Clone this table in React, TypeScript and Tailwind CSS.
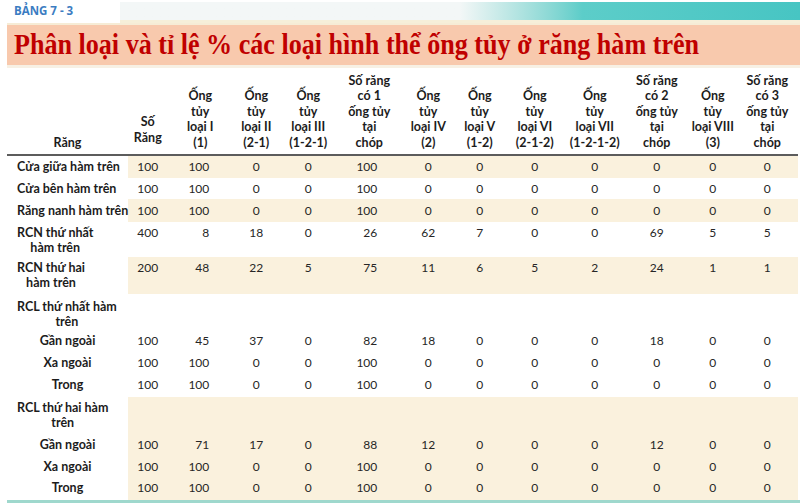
import React from 'react';

type Row = {
  label: string[];
  vals?: number[];
  band?: boolean;
  sub?: boolean;
  h: string;
  pt: string;
};

// which numeric columns are right-aligned (index into vals)
const rightCols = [1, 4];

const headers: { lines: string[]; extra?: string }[] = [
  { lines: ['Số', 'Răng'], extra: 'pb-[9px]' },
  { lines: ['Ống', 'tủy', 'loại I', '(1)'] },
  { lines: ['Ống', 'tủy', 'loại II', '(2-1)'] },
  { lines: ['Ống', 'tủy', 'loại III', '(1-2-1)'] },
  { lines: ['Số răng', 'có 1', 'ống tủy', 'tại', 'chóp'] },
  { lines: ['Ống', 'tủy', 'loại IV', '(2)'] },
  { lines: ['Ống', 'tủy', 'loại V', '(1-2)'] },
  { lines: ['Ống', 'tủy', 'loại VI', '(2-1-2)'] },
  { lines: ['Ống', 'tủy', 'loại VII', '(1-2-1-2)'] },
  { lines: ['Số răng', 'có 2', 'ống tủy', 'tại', 'chóp'] },
  { lines: ['Ống', 'tủy', 'loại VIII', '(3)'] },
  { lines: ['Số răng', 'có 3', 'ống tủy', 'tại', 'chóp'] },
];

const rows: Row[] = [
  { label: ['Cửa giữa hàm trên'], vals: [100, 100, 0, 0, 100, 0, 0, 0, 0, 0, 0, 0], band: true, h: 'h-[22px]', pt: 'pt-[3px]' },
  { label: ['Cửa bên hàm trên'], vals: [100, 100, 0, 0, 100, 0, 0, 0, 0, 0, 0, 0], h: 'h-[21px]', pt: 'pt-[3px]' },
  { label: ['Răng nanh hàm trên'], vals: [100, 100, 0, 0, 100, 0, 0, 0, 0, 0, 0, 0], band: true, h: 'h-[23px]', pt: 'pt-[4px]' },
  { label: ['RCN thứ nhất', 'hàm trên'], vals: [400, 8, 18, 0, 26, 62, 7, 0, 0, 69, 5, 5], h: 'h-[35px]', pt: 'pt-[3px]' },
  { label: ['RCN thứ hai', 'hàm trên'], vals: [200, 48, 22, 5, 75, 11, 6, 5, 2, 24, 1, 1], band: true, h: 'h-[37px]', pt: 'pt-[3px]' },
  { label: ['RCL thứ nhất hàm', 'trên'], h: 'h-[36px]', pt: 'pt-[5px]' },
  { label: ['Gần ngoài'], vals: [100, 45, 37, 0, 82, 18, 0, 0, 0, 18, 0, 0], sub: true, h: 'h-[22px]', pt: 'pt-[3px]' },
  { label: ['Xa ngoài'], vals: [100, 100, 0, 0, 100, 0, 0, 0, 0, 0, 0, 0], sub: true, h: 'h-[21px]', pt: 'pt-[3px]' },
  { label: ['Trong'], vals: [100, 100, 0, 0, 100, 0, 0, 0, 0, 0, 0, 0], sub: true, h: 'h-[24px]', pt: 'pt-[4px]' },
  { label: ['RCL thứ hai hàm', 'trên'], band: true, h: 'h-[36px]', pt: 'pt-[3px]' },
  { label: ['Gần ngoài'], vals: [100, 71, 17, 0, 88, 12, 0, 0, 0, 12, 0, 0], band: true, sub: true, h: 'h-[23px]', pt: 'pt-[4px]' },
  { label: ['Xa ngoài'], vals: [100, 100, 0, 0, 100, 0, 0, 0, 0, 0, 0, 0], band: true, sub: true, h: 'h-[21px]', pt: 'pt-[3px]' },
  { label: ['Trong'], vals: [100, 100, 0, 0, 100, 0, 0, 0, 0, 0, 0, 0], band: true, sub: true, h: 'h-[23px]', pt: 'pt-[3px]' },
];

const colWidths = ['w-[121px]', 'w-[39px]', 'w-[66px]', 'w-[46px]', 'w-[58px]', 'w-[64px]', 'w-[54px]', 'w-[49px]', 'w-[61px]', 'w-[59px]', 'w-[65px]', 'w-[47px]', 'w-[62px]'];

export default function App() {
  return (
    <div className="w-[800px] h-[503px] overflow-hidden bg-white font-['Lato',_'Noto_Sans',_sans-serif] text-[#1c1c1c]">
      {/* top strip */}
      <div className="flex h-[23px]">
        <div className="ml-[7px] w-[113px] bg-white pl-[7px] pt-[5px] text-[11.5px] leading-none font-bold text-[#3b7cc2] font-['Open_Sans',_sans-serif]">
          BẢNG 7 - 3
        </div>
        <div className="flex-1 flex flex-col">
          <div className="mt-[2px] h-[18px] bg-linear-to-r from-[#f3f7f7] from-50% via-[#5ccdc9] via-68% to-[#47c5c3] to-100%" />
          <div className="flex-1 bg-[#f6efd9]" />
        </div>
      </div>

      {/* title band */}
      <div className="ml-[7px] h-[45px] border-t-2 border-b-[3px] border-t-[#f6ecd6] border-b-[#f7f0e4] bg-[#f8c9ad] flex items-center overflow-hidden">
        <h1 className="pl-[8px] pb-[2px] origin-left scale-x-[0.87] whitespace-nowrap text-[30px] leading-none font-bold text-[#c00000] font-['Liberation_Serif',_'Times_New_Roman',_serif]">
          Phân loại và tỉ lệ % các loại hình thể ống tủy ở răng hàm trên
        </h1>
      </div>

      {/* table */}
      <table className="ml-[7px] table-fixed border-separate border-spacing-0 text-[12.5px]">
        <colgroup>
          {colWidths.map((w, i) => (
            <col key={i} className={w} />
          ))}
        </colgroup>
        <thead>
          <tr>
            <th className="h-[88px] align-bottom border-b-2 border-[#5c5c5c] pb-[4px] pl-[10px] text-left font-bold leading-[15.5px]">
              <span className="inline-block w-[101px] text-center">Răng</span>
            </th>
            {headers.map((hd, i) => (
              <th
                key={i}
                className={`h-[88px] align-bottom border-b-2 border-[#5c5c5c] text-center font-bold leading-[15.5px] whitespace-nowrap ${hd.extra ?? 'pb-[4px]'}`}
              >
                {hd.lines.map((l, j) => (
                  <div key={j}>{l}</div>
                ))}
              </th>
            ))}
          </tr>
        </thead>
        <tbody>
          {rows.map((r, i) => (
            <tr key={i}>
              <td className={`${r.h} ${r.pt} align-top pl-[10px] font-bold leading-[15px] whitespace-nowrap`}>
                {r.sub ? (
                  <div className="w-[101px] text-center">{r.label[0]}</div>
                ) : (
                  <div className="inline-block text-center">
                    {r.label.map((l, j) => (
                      <div key={j}>{l}</div>
                    ))}
                  </div>
                )}
              </td>
              {Array.from({ length: 12 }).map((_, c) => {
                const v = r.vals ? r.vals[c] : '';
                const isRight = rightCols.includes(c);
                return (
                  <td
                    key={c}
                    className={`${r.h} ${r.pt} align-top leading-[15px] text-[12px] text-[#262626] ${r.band ? 'bg-[#faf1dd]' : ''} ${isRight ? 'text-right pr-[24px]' : 'text-center'}`}
                  >
                    {v}
                  </td>
                );
              })}
            </tr>
          ))}
        </tbody>
      </table>
      <div className="ml-[7px] h-[4px] bg-[#9fd8cd]" />
    </div>
  );
}
